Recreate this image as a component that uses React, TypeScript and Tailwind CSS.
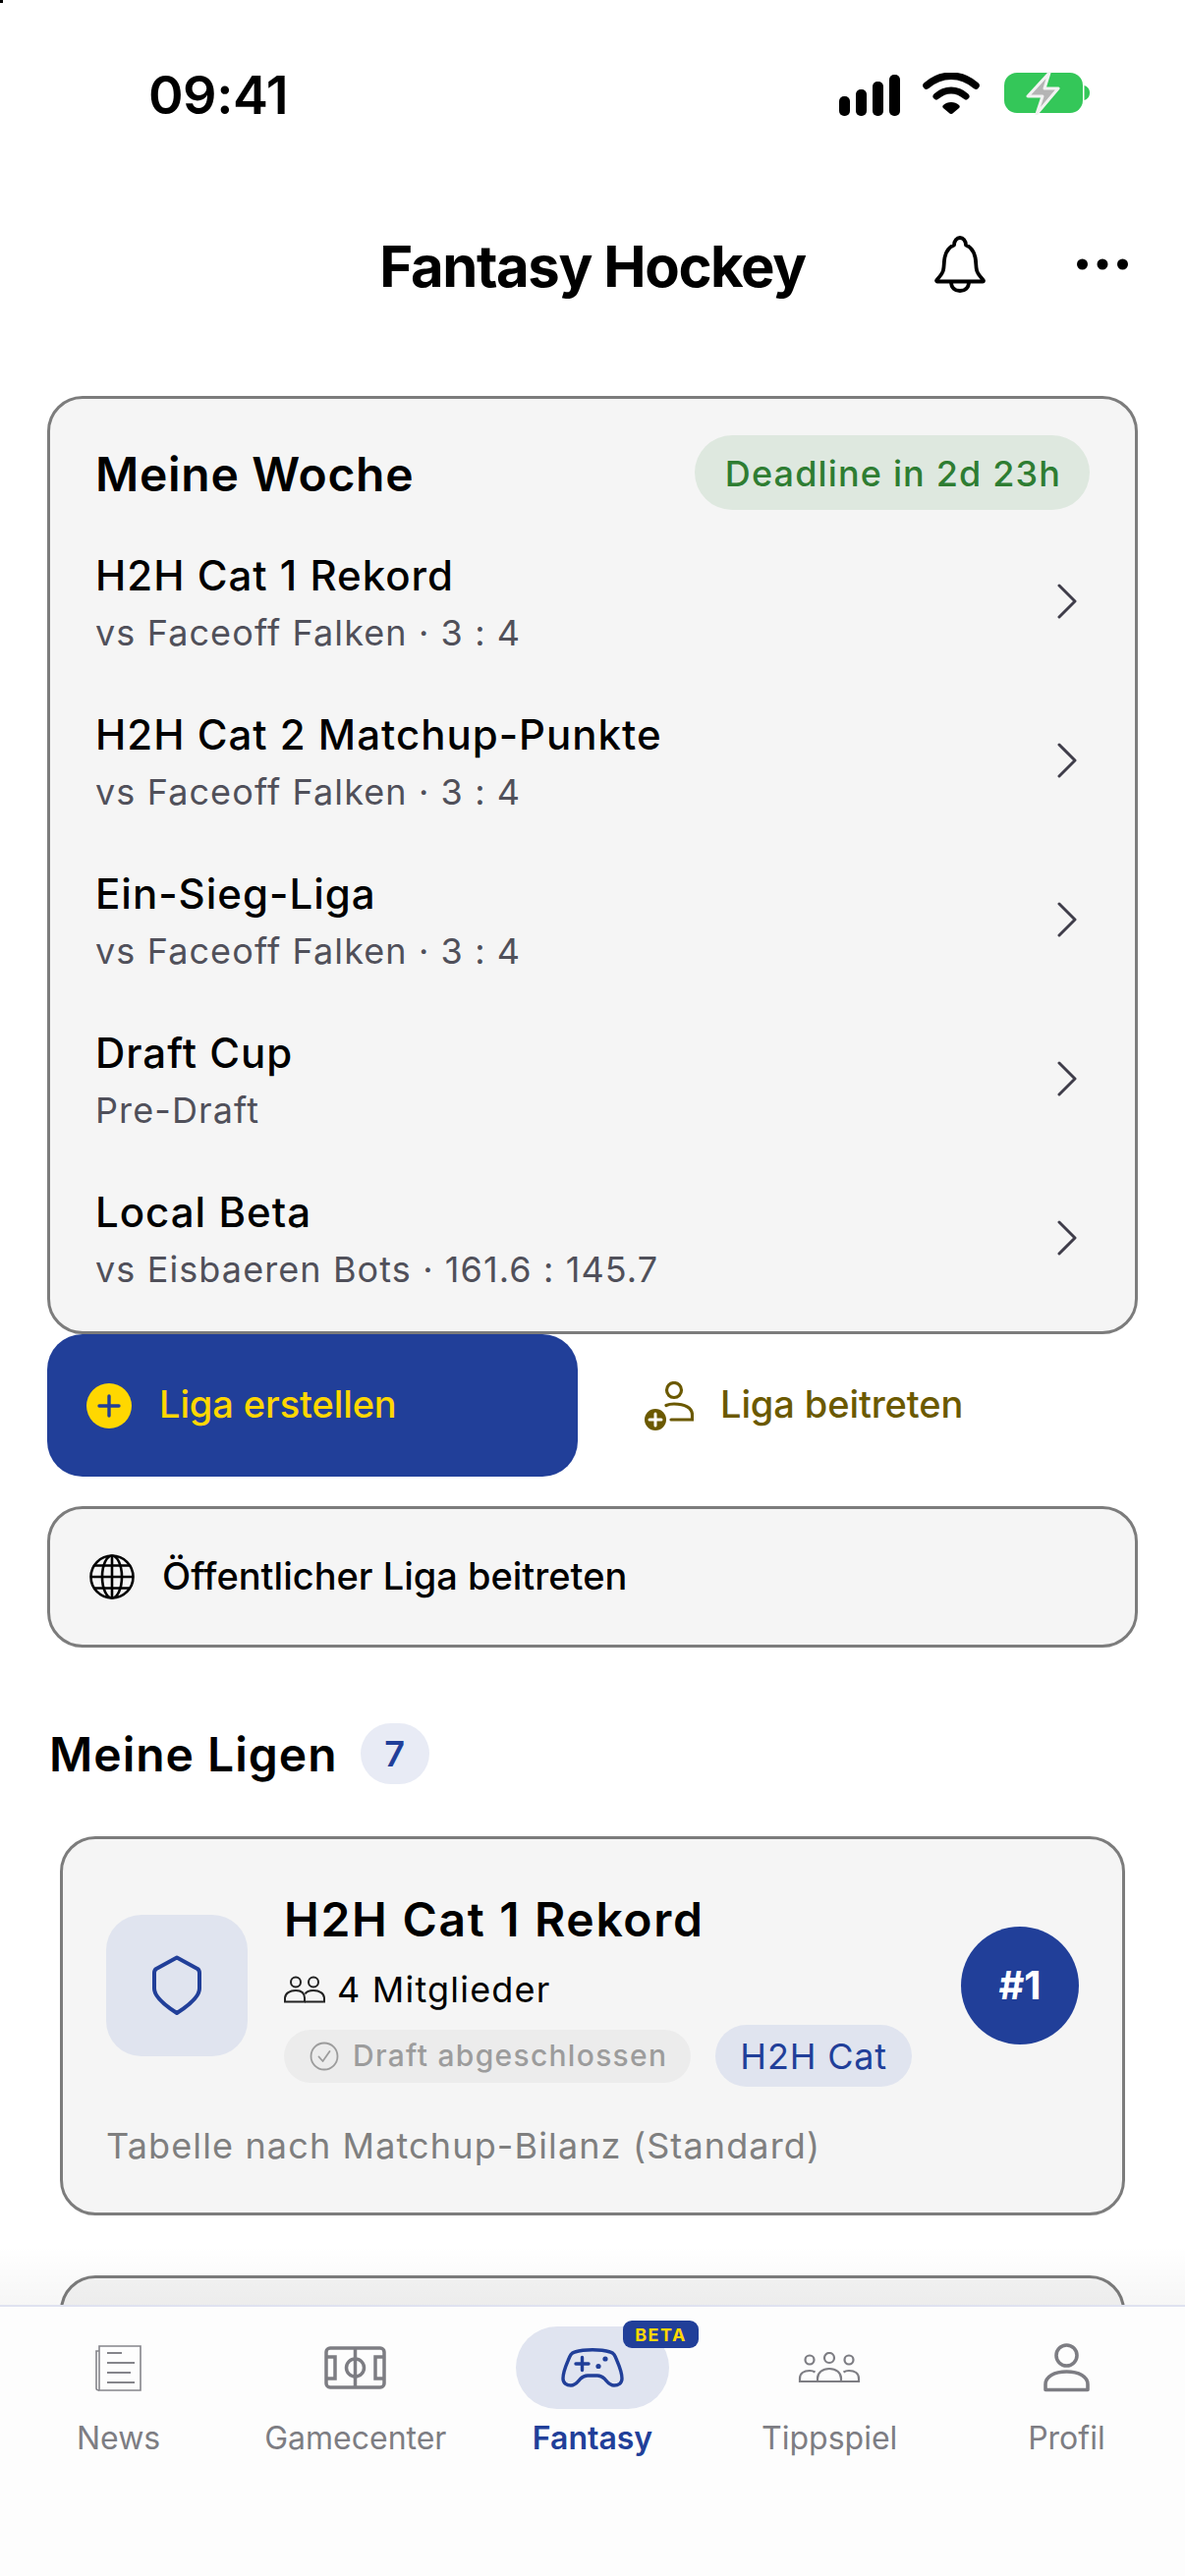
import React from 'react';

const BLUE = '#213f99';

const WEEK_ROWS = [
  { title: 'H2H Cat 1 Rekord', sub: 'vs Faceoff Falken · 3 : 4' },
  { title: 'H2H Cat 2 Matchup-Punkte', sub: 'vs Faceoff Falken · 3 : 4' },
  { title: 'Ein-Sieg-Liga', sub: 'vs Faceoff Falken · 3 : 4' },
  { title: 'Draft Cup', sub: 'Pre-Draft' },
  { title: 'Local Beta', sub: 'vs Eisbaeren Bots · 161.6 : 145.7' },
];

const StatusIcons = () => (
  <div className="flex items-start">
    <svg width="62" height="42" viewBox="0 0 62 42" className="mt-[3px]">
      <rect x="0" y="22" width="11" height="20" rx="5" fill="#000" />
      <rect x="17" y="15" width="11" height="27" rx="5" fill="#000" />
      <rect x="34" y="7" width="11" height="35" rx="5" fill="#000" />
      <rect x="51" y="0" width="11" height="42" rx="5" fill="#000" />
    </svg>
    <svg width="58" height="42" viewBox="0 0 58 42" className="ml-[23px] mt-[1px]">
      <path d="M4 13 C19 0 39 0 54 13" fill="none" stroke="#000" strokeWidth="7.5" strokeLinecap="round" />
      <path d="M14 24 C23 16 35 16 44 24" fill="none" stroke="#000" strokeWidth="7" strokeLinecap="round" />
      <path d="M21 33 C25 29 33 29 37 33 C38 34 38 35 37 36 L30.5 41.5 C29.5 42.2 28.5 42.2 27.5 41.5 L21 36 C20 35 20 34 21 33 Z" fill="#000" />
    </svg>
    <svg width="87" height="44" viewBox="0 0 87 44" className="ml-[25px]">
      <rect x="0" y="1" width="80" height="41" rx="13" fill="#34c759" />
      <path d="M81.5 14 C85 15 87 18 87 21.5 C87 25 85 28 81.5 29 Z" fill="#34c759" />
      <path d="M46 1 L24 25 H39 L33 43 L55 17 H41 Z" fill="#b4b4b4" stroke="#f2f2f2" strokeWidth="3" strokeLinejoin="round" />
    </svg>
  </div>
);

const Bell = () => (
  <svg width="54" height="58" viewBox="0 0 54 58" fill="none" stroke="#000" strokeWidth="3.8" strokeLinejoin="round" strokeLinecap="round">
    <path d="M3 45.5 C3 44.5 9 40 10 35 C11 31 10.5 27 11.5 22 C13 15 17 11 21 9.5 C21 5 24 2 27 2 C30 2 33 5 33 9.5 C37 11 41 15 42.5 22 C43.5 27 43 31 44 35 C45 40 51 44.5 51 45.5 C51 46 50.5 46.5 50 46.5 H4 C3.5 46.5 3 46 3 45.5 Z" />
    <path d="M18 47 C18 53 22 56 27 56 C32 56 36 53 36 47" />
  </svg>
);

const Dots = () => (
  <svg width="52" height="12" viewBox="0 0 52 12" fill="#000">
    <circle cx="5.5" cy="6" r="5.5" />
    <circle cx="26" cy="6" r="5.5" />
    <circle cx="46.5" cy="6" r="5.5" />
  </svg>
);

const Chevron = () => (
  <svg width="20" height="36" viewBox="0 0 20 36" fill="none" stroke="#3f3d4a" strokeWidth="3" strokeLinecap="round" strokeLinejoin="round">
    <path d="M2 2 L18 18 L2 34" />
  </svg>
);

const JoinIcon = () => (
  <svg width="50" height="50" viewBox="0 0 50 50" fill="none" stroke="#6b5900" strokeWidth="3.2" strokeLinecap="round">
    <circle cx="30" cy="9" r="7.5" />
    <path d="M27 39 H48.5 V34 C48.5 27 41 23 30 23 C27 23 24 23.5 22 24.5" />
    <circle cx="11" cy="39" r="11" fill="#6b5900" stroke="none" />
    <path d="M11 33 V45 M5 39 H17" stroke="#fff" strokeWidth="3" />
  </svg>
);

const Globe = () => (
  <svg width="46" height="46" viewBox="0 0 46 46" fill="none" stroke="#000" strokeWidth="2.6">
    <circle cx="23" cy="23" r="21.5" />
    <ellipse cx="23" cy="23" rx="10" ry="21.5" />
    <path d="M23 1.5 V44.5 M1.5 23 H44.5 M5 11.5 H41 M5 34.5 H41" />
  </svg>
);

const Shield = () => (
  <svg width="52" height="62" viewBox="0 0 52 62" fill="none" stroke={BLUE} strokeWidth="4" strokeLinejoin="round">
    <path d="M26 2.5 L47 14 C48.5 15 49 16 49 18 V34 C49 42 37 52 26 59 C15 52 3 42 3 34 V18 C3 16 3.5 15 5 14 Z" />
  </svg>
);

const MembersIcon = () => (
  <svg width="42" height="28" viewBox="0 0 42 28" fill="none" stroke="#222" strokeWidth="2">
    <circle cx="12" cy="6.5" r="5" />
    <circle cx="30" cy="6.5" r="5" />
    <path d="M1 26.5 V23 C1 18 6 15 12 15 C18 15 21 18 21 23 V26.5 Z" />
    <path d="M21 26.5 H41 V23 C41 18 36 15 30 15 C26 15 23 16 21.5 18.5" />
  </svg>
);

const CheckCircle = () => (
  <svg width="30" height="30" viewBox="0 0 30 30" fill="none" stroke="#9c9c9c" strokeWidth="1.8" strokeLinecap="round" strokeLinejoin="round">
    <circle cx="15" cy="15" r="13.5" />
    <path d="M9.5 15.5 L13.5 20 L20.5 10" />
  </svg>
);

const NewsIcon = () => (
  <svg width="47" height="47" viewBox="0 0 47 47" fill="none" stroke="#85858b" strokeWidth="1.6">
    <path d="M4 1 H46 V46 H4 Z" />
    <path d="M4 6 H1 V44 C1 45.5 2.5 46 4 46" />
    <path d="M12 8 H27 M12 18 H40 M12 28 H36 M12 38 H40" strokeWidth="2.2" />
  </svg>
);

const FieldIcon = () => (
  <svg width="63" height="44" viewBox="0 0 63 44" fill="none" stroke="#7d7d83" strokeWidth="3.5">
    <rect x="2" y="2" width="59" height="40" rx="4" />
    <path d="M31.5 2 V42" />
    <circle cx="31.5" cy="22" r="9" />
    <path d="M2 11 H11 V33 H2 M61 11 H52 V33 H61" />
  </svg>
);

const PadIcon = () => (
  <svg width="64" height="40" viewBox="0 0 64 40" fill="none" stroke={BLUE} strokeWidth="3.4" strokeLinecap="round" strokeLinejoin="round">
    <path d="M14 4 C24 1 40 1 50 4 C54 5 55 8 57 13 C60 20 62 26 62 31 C62 36 58 38 54 38 C49 38 47 34 44 31 C42 29 40 28 37 28 H27 C24 28 22 29 20 31 C17 34 15 38 10 38 C6 38 2 36 2 31 C2 26 4 20 7 13 C9 8 10 5 14 4 Z" />
    <path d="M15 16 H28 M21.5 9.5 V22.5" />
    <circle cx="38" cy="18.5" r="2.6" fill={BLUE} stroke="none" />
    <circle cx="45" cy="11" r="2.6" fill={BLUE} stroke="none" />
  </svg>
);

const CrowdIcon = () => (
  <svg width="64" height="32" viewBox="0 0 64 32" fill="none" stroke="#7d7d83" strokeWidth="2.2">
    <circle cx="32" cy="6" r="5" />
    <circle cx="12" cy="8" r="4.5" />
    <circle cx="52" cy="8" r="4.5" />
    <path d="M20 30 V27 C20 21 25 17 32 17 C39 17 44 21 44 27 V30 Z" />
    <path d="M20 30 H2 V27 C2 22 6 19 12 19 C14 19 16 19.5 17.5 20.5" />
    <path d="M44 30 H62 V27 C62 22 58 19 52 19 C50 19 48 19.5 46.5 20.5" />
  </svg>
);

const ProfileIcon = () => (
  <svg width="47" height="50" viewBox="0 0 47 50" fill="none" stroke="#7d7d83" strokeWidth="3.6">
    <circle cx="23.5" cy="12.5" r="10.5" />
    <path d="M2 47.5 V42 C2 34 11 29 23.5 29 C36 29 45 34 45 42 V47.5 Z" strokeLinejoin="round" />
  </svg>
);

const NAV_ITEMS = [
  { label: 'News', icon: <NewsIcon /> },
  { label: 'Gamecenter', icon: <FieldIcon /> },
  { label: 'Fantasy', icon: <PadIcon />, active: true },
  { label: 'Tippspiel', icon: <CrowdIcon /> },
  { label: 'Profil', icon: <ProfileIcon /> },
];

const App: React.FC = () => {
  return (
    <div className="relative h-[2622px] w-[1206px] overflow-hidden bg-white font-['Inter',sans-serif] text-black">
      <div className="absolute left-0 top-0 h-[3px] w-[3px] bg-black" />

      {/* Status bar */}
      <div className="flex h-[190px] items-start justify-between pl-[151px] pr-[97px] pt-[73px]">
        <span className="text-[54px] font-semibold leading-[48px] tracking-[-0.5px]">09:41</span>
        <StatusIcons />
      </div>

      {/* Header */}
      <header className="grid h-[162px] grid-cols-[1fr_auto_1fr] items-center">
        <div />
        <h1 className="text-[58px] font-bold tracking-[-1.4px]">Fantasy Hockey</h1>
        <div className="mb-[4px] flex items-center justify-end pr-[58px]">
          <Bell />
          <span className="ml-[92px]"><Dots /></span>
        </div>
      </header>

      <main className="px-[48px] pt-[51px]">
        {/* Meine Woche */}
        <section className="h-[955px] rounded-[36px] border-[3px] border-[#7c7c7c] bg-[#f5f5f5] px-[46px] pt-[37px]">
          <div className="mb-[12px] flex h-[76px] items-center justify-between">
            <h2 className="pt-[3px] text-[48px] font-semibold leading-[62px] tracking-[0.7px]">Meine Woche</h2>
            <span className="flex h-[76px] items-center rounded-full bg-[#dee8df] pl-[31px] pr-[29px] pt-[2px] text-[36px] font-medium tracking-[1.15px] text-[#2e7d32]">
              Deadline in 2d 23h
            </span>
          </div>
          {WEEK_ROWS.map((row) => (
            <div key={row.title} className="flex h-[162px] items-center justify-between pr-[13px]">
              <div className="pt-[5px]">
                <div className="text-[42px] font-medium leading-[58px] tracking-[1px]">{row.title}</div>
                <div className="text-[36px] leading-[58px] tracking-[1.1px] text-[#50505a]">{row.sub}</div>
              </div>
              <Chevron />
            </div>
          ))}
        </section>

        {/* Actions */}
        <div className="flex items-stretch">
          <button className="flex h-[145px] w-[540px] items-center gap-[28px] rounded-[36px] bg-[#213f99] pl-[40px] text-[38px] font-medium tracking-[-0.1px] text-[#ffd700]">
            <span className="flex h-[46px] w-[46px] items-center justify-center rounded-full bg-[#ffd700]">
              <svg width="24" height="24" viewBox="0 0 24 24" stroke="#213f99" strokeWidth="3.4" strokeLinecap="round">
                <path d="M12 2 V22 M2 12 H22" />
              </svg>
            </span>
            <span className="pb-[3px]">Liga erstellen</span>
          </button>
          <button className="flex items-center gap-[27px] pl-[68px] text-[38px] font-medium tracking-[-0.1px] text-[#6b5900]">
            <JoinIcon />
            <span className="pb-[3px]">Liga beitreten</span>
          </button>
        </div>

        <button className="mt-[30px] flex h-[144px] w-full items-center gap-[28px] rounded-[36px] border-[3px] border-[#7c7c7c] bg-[#f5f5f5] pl-[40px] text-[38px] font-medium">
          <Globe />
          <span className="pb-[2px]">Öffentlicher Liga beitreten</span>
        </button>

        {/* Meine Ligen */}
        <div className="mt-[77px] flex h-[62px] items-center gap-[23px] pl-[2px]">
          <h2 className="pt-[1px] text-[48px] font-semibold leading-[62px] tracking-[1px]">Meine Ligen</h2>
          <span className="flex h-[62px] w-[70px] items-center justify-center rounded-full bg-[#e8ebf5] text-[36px] font-semibold text-[#213f99]">7</span>
        </div>

        <article className="mx-[13px] mt-[53px] h-[386px] rounded-[36px] border-[3px] border-[#7c7c7c] bg-[#f5f5f5] px-[44px] pt-[52px]">
          <div className="flex items-center">
            <div className="mb-[6px] flex h-[144px] w-[144px] shrink-0 items-center justify-center rounded-[36px] bg-[#e0e4ef]">
              <Shield />
            </div>
            <div className="ml-[37px] flex-1">
              <div className="text-[48px] font-semibold leading-[60px] tracking-[1.7px]">H2H Cat 1 Rekord</div>
              <div className="mt-[17px] flex items-center gap-[12px] text-[36px] leading-[48px] tracking-[1.2px]">
                <MembersIcon />
                4 Mitglieder
              </div>
              <div className="mt-[12px] flex items-center gap-[25px]">
                <span className="flex h-[54px] items-center gap-[14px] rounded-full bg-[#ececec] pl-[26px] pr-[24px] text-[30px] font-medium tracking-[1.3px] text-[#9c9c9c]">
                  <CheckCircle />
                  Draft abgeschlossen
                </span>
                <span className="flex h-[63px] items-center rounded-full bg-[#e0e4ef] px-[25px] text-[36px] tracking-[0.8px] text-[#213f99]">H2H Cat</span>
              </div>
            </div>
            <div className="mb-[6px] flex h-[120px] w-[120px] shrink-0 items-center justify-center rounded-full bg-[#213f99] text-[40px] font-bold text-white">#1</div>
          </div>
          <p className="mt-[36px] text-[36px] leading-[48px] tracking-[1.13px] text-[#7f7f7f]">Tabelle nach Matchup-Bilanz (Standard)</p>
        </article>

        <article className="mx-[13px] mt-[61px] h-[386px] rounded-[36px] border-[3px] border-[#7c7c7c] bg-[#f5f5f5]" />
      </main>

      {/* Bottom navigation */}
      <div className="absolute bottom-[276px] left-0 right-0 h-[60px] bg-gradient-to-b from-transparent to-black/[0.035]" />
      <nav className="absolute bottom-0 left-0 right-0 grid h-[276px] grid-cols-5 border-t-2 border-[#dfe2f0] bg-[#fdfdfd] pt-[20px]">
        {NAV_ITEMS.map((item) => (
          <div key={item.label} className="flex flex-col items-center">
            <div className={`relative flex h-[84px] w-[156px] items-center justify-center rounded-full ${item.active ? 'bg-[#e0e4f0]' : ''}`}>
              {item.icon}
              {item.active && (
                <span className="absolute right-[-30px] top-[-6px] flex h-[28px] w-[77px] items-center justify-center rounded-[9px] bg-[#213f99] text-[18px] font-bold tracking-[1.5px] text-[#ffd700]">
                  BETA
                </span>
              )}
            </div>
            <span className={`mt-[9px] text-[32px] leading-[42px] ${item.active ? 'font-semibold text-[#213f99]' : 'font-normal text-[#7d7d83]'}`}>
              {item.label}
            </span>
          </div>
        ))}
      </nav>
    </div>
  );
};

export default App;
